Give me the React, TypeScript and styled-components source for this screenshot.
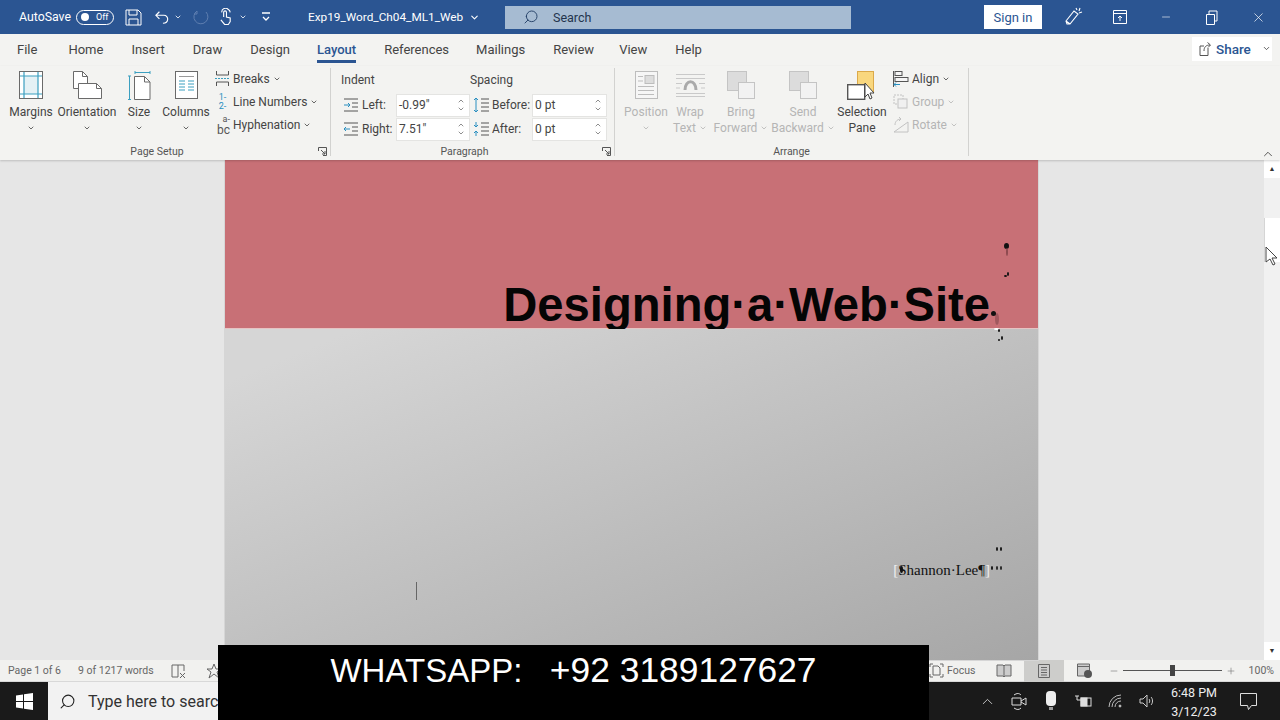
import styled, { createGlobalStyle } from "styled-components";
import { ChevronDown, ChevronUp, Minus, Plus, Search as SearchIcon, X } from "lucide-react";

const GlobalStyle = createGlobalStyle`
  html, body { margin: 0; padding: 0; height: 100%; overflow: hidden; }
  #root { width: 1280px; height: 720px; }
  * { box-sizing: border-box; }
`;

const FONT = `Roboto, "Open Sans", "Liberation Sans", sans-serif`;

const Chev = ({ size = 8, color = "currentColor" }: { size?: number; color?: string }) => (
  <ChevronDown size={size} color={color} strokeWidth={2.4} />
);

function MarginsIcon() {
  return (
    <svg width="24" height="28" viewBox="0 0 24 28" fill="none">
      <rect x=".5" y=".5" width="23" height="27" fill="#fff" stroke="#6a6a6a" />
      <rect x="5" y="5" width="14" height="18" fill="#e4f1f5" />
      <path d="M5 1v26M19 1v26M1 5h22M1 23h22" stroke="#3b9fc0" strokeWidth="1.2" />
    </svg>
  );
}
function OrientationIcon() {
  return (
    <svg width="29" height="28" viewBox="0 0 29 28" fill="none" stroke="#6a6a6a">
      <path d="M.5.500h9l5 5v12H.500z" fill="#fff" />
      <path d="M9.500.500v5h5" />
      <path d="M5.500 12.500h18l5 5v10H5.500z" fill="#fff" />
      <path d="M23.500 12.500v5h5" />
    </svg>
  );
}
function SizeIcon() {
  return (
    <svg width="23" height="29" viewBox="0 0 23 29" fill="none">
      <path d="M7 1.500h15M7 0v3M22 0v3M1.500 5v24M0 5h3M0 28.500h3" stroke="#3b9fc0" />
      <path d="M6.500 5.500h10l5.500 5.500v17.500H6.500z" fill="#fff" stroke="#6a6a6a" />
      <path d="M16.500 5.500V11H22" stroke="#6a6a6a" />
    </svg>
  );
}
function ColumnsIcon() {
  return (
    <svg width="23" height="28" viewBox="0 0 23 28" fill="none">
      <rect x=".5" y=".5" width="22" height="27" fill="#fff" stroke="#6a6a6a" />
      <path d="M4 10h6M13 10h6M4 13h6M13 13h6M4 16h6M13 16h6M4 19h6M13 19h6" stroke="#3b9fc0" />
      <path d="M4 5.500h15" stroke="#9a9a9a" />
    </svg>
  );
}
function BreaksIcon() {
  return (
    <svg width="15" height="15" viewBox="0 0 15 15" fill="none" stroke="#555">
      <path d="M1.500 0v4h12V0M1.500 15v-4h12v4" />
      <path d="M0 7.500h15" stroke="#3b9fc0" strokeDasharray="2 1" />
    </svg>
  );
}
function IndentIcon({ kind }: { kind?: string }) {
  return (
    <svg width="16" height="14" viewBox="0 0 16 14" fill="none" stroke="#555">
      <path d="M1 1h14M9 5h6M9 9h6M1 13h14" />
      <path d={kind === "left" ? "M1 7h6M5 5l2 2-2 2" : "M1 7h6M3 5L1 7l2 2"} stroke="#2a8fc0" />
    </svg>
  );
}
function SpacingIcon({ after }: { after?: boolean }) {
  return (
    <svg width="17" height="16" viewBox="0 0 17 16" fill="none" stroke="#555">
      <path d="M9 2h8M9 6h8M9 10h8M9 14h8" />
      {after ? (
        <path d="M4 1v5M2 4l2 2 2-2M4 15v-5M2 12l2-2 2 2" stroke="#2a8fc0" />
      ) : (
        <path d="M4 1v14M2 3l2-2 2 2M2 13l2 2 2-2" stroke="#2a8fc0" />
      )}
    </svg>
  );
}
function PositionIcon() {
  return (
    <svg width="23" height="28" viewBox="0 0 23 28" fill="none" stroke="#bdbdbd">
      <rect x=".5" y=".5" width="22" height="27" fill="#f6f6f6" />
      <rect x="10" y="4.500" width="9" height="8" fill="#ddd" />
      <path d="M3 5.500h5M3 10h5M3 15.500h16M3 19.500h16M3 23.500h16" />
    </svg>
  );
}
function WrapIcon() {
  return (
    <svg width="29" height="28" viewBox="0 0 29 28" fill="none" stroke="#c9c9c9">
      <path d="M0 3.500h29M0 7.500h29M0 22.500h29M0 25.500h29M0 12.500h6M23 12.500h6M0 17h4M25 17h4" />
      <path d="M9 19c0-11 11-11 11 0" stroke="#aaa" strokeWidth="3" />
    </svg>
  );
}
function StackIcon() {
  return (
    <svg width="28" height="28" viewBox="0 0 28 28" fill="none" stroke="#c4c4c4">
      <rect x=".5" y=".5" width="19" height="19" fill="#dcdcdc" />
      <rect x="11.500" y="11.500" width="16" height="16" fill="#f2f2f2" />
    </svg>
  );
}
function SelectionIcon() {
  return (
    <svg width="30" height="30" viewBox="0 0 30 30" fill="none">
      <rect x="10.500" y=".5" width="16" height="20" fill="#f9d77e" stroke="#dba94a" />
      <rect x=".7" y="13.700" width="17" height="14.600" fill="#fff" stroke="#555" strokeWidth="1.400" />
      <path d="M18 12v14l3-3 2 5 2-1-2-5h4z" fill="#fff" stroke="#444" />
    </svg>
  );
}
function AlignIcon() {
  return (
    <svg width="16" height="16" viewBox="0 0 16 16" fill="none" stroke="#555">
      <path d="M.5 0v16" />
      <rect x="2" y=".5" width="7" height="4" fill="#f5f5f5" />
      <rect x="2" y="6.500" width="13" height="4" fill="#f5f5f5" />
      <path d="M1 13.500h6M3 11.500l-2 2 2 2" stroke="#2a8fc0" />
    </svg>
  );
}
function GroupIcon() {
  return (
    <svg width="16" height="16" viewBox="0 0 16 16" fill="none" stroke="#c2c2c2">
      <rect x="1" y="1" width="9" height="9" strokeDasharray="2 1" />
      <rect x="5" y="5" width="9" height="9" fill="#f0f0f0" />
    </svg>
  );
}
function RotateIcon() {
  return (
    <svg width="16" height="16" viewBox="0 0 16 16" fill="none" stroke="#c2c2c2">
      <path d="M1 15L15 5v10z" />
      <path d="M2 8c0-4 3-6 6-6M6 0l2 2-2 2" />
    </svg>
  );
}
function Launcher() {
  return (
    <svg width="9" height="9" viewBox="0 0 9 9" fill="none" stroke="#555">
      <path d="M.5 4V.5H8.500V8.500H5M3 3l4 4M4 7h3V4" />
    </svg>
  );
}
function WindowsLogo() {
  return (
    <svg width="17" height="17" viewBox="0 0 17 17" fill="#fff">
      <path d="M0 2.400l7-1V8H0zM8 1.200L17 0v8H8zM0 9h7v6.600l-7-1zM8 9h9v8l-9-1.200z" />
    </svg>
  );
}
function CursorArrow() {
  return (
    <svg width="14" height="20" viewBox="0 0 14 20" fill="#fff" stroke="#444">
      <path d="M1 1v15l4-3 3 6 2-1-3-6h5z" />
    </svg>
  );
}

const SpinArrows = () => (
  <Arrows>
    <ChevronUp size={8} strokeWidth={2} />
    <ChevronDown size={8} strokeWidth={2} />
  </Arrows>
);

const specks = [
  { left: 779, top: 83, w: 5, h: 6, c: "#111" },
  { left: 781, top: 88, w: 2, h: 8, c: "#8d4a50" },
  { left: 782, top: 112, w: 2, h: 4, c: "#111" },
  { left: 779, top: 115, w: 3, h: 2, c: "#111" },
  { left: 770, top: 153, w: 4, h: 12, c: "#a0585e" },
  { left: 766, top: 151, w: 5, h: 5, c: "#111" },
  { left: 769, top: 168, w: 5, h: 2, c: "#fff" },
  { left: 773, top: 169, w: 2, h: 3, c: "#111" },
  { left: 776, top: 176, w: 2, h: 4, c: "#111" },
  { left: 773, top: 179, w: 2, h: 2, c: "#111" },
  { left: 771, top: 387, w: 2, h: 4, c: "#111" },
  { left: 775, top: 387, w: 2, h: 4, c: "#111" },
  { left: 675, top: 406, w: 3, h: 7, c: "#111" },
  { left: 766, top: 406, w: 2, h: 4, c: "#111" },
  { left: 771, top: 406, w: 2, h: 4, c: "#222" },
  { left: 775, top: 406, w: 2, h: 4, c: "#222" },
];

export default function App() {
  return (
    <>
      <GlobalStyle />
      <Screen>
        <TitleBar>
          <AutoSave>AutoSave</AutoSave>
          <Toggle>
            <ToggleDot />
            Off
          </Toggle>
          <TitleIcons>
            <svg width="17" height="17" viewBox="0 0 17 17" fill="none" stroke="#fff">
              <path d="M1 1h12l3 3v12H1zM4 1v5h8V1M4 16v-6h9v6" />
            </svg>
            <QatItem $ml={13}>
              <svg width="15" height="15" viewBox="0 0 17 15" fill="none" stroke="#fff" strokeWidth="1.300">
                <path d="M5 1L1 5l4 4M1 5h9c6 0 6 9-1 9" />
              </svg>
            </QatItem>
            <QatItem $ml={4}><Chev color="#fff" /></QatItem>
            <QatItem $ml={11}>
              <svg width="16" height="16" viewBox="0 0 16 16" fill="none" stroke="#5f7fb0">
                <path d="M13 3a7 7 0 1 1-9-1M4 2v3H1" />
              </svg>
            </QatItem>
            <QatItem $ml={10}>
              <svg width="14" height="18" viewBox="0 0 15 18" fill="none" stroke="#fff" strokeWidth="1.200">
                <path d="M5 9V4a1.500 1.500 0 0 1 3 0v5l4 1v4l-2 3H6l-4-5M3 4a4 4 0 0 1 7-3 4 4 0 0 1 2 3" />
              </svg>
            </QatItem>
            <QatItem $ml={6}><Chev color="#fff" /></QatItem>
            <QatItem $ml={14}>
              <svg width="10" height="10" viewBox="0 0 10 10" fill="none" stroke="#fff" strokeWidth="1.300">
                <path d="M1 1h8M2 5l3 3 3-3" />
              </svg>
            </QatItem>
          </TitleIcons>
          <DocName>
            Exp19_Word_Ch04_ML1_Web
            <ChevronDown size={11} color="#fff" strokeWidth={2.4} />
          </DocName>
          <SearchBox>
            <SearchIcon size={16} color="#243f66" strokeWidth={1.4} style={{ transform: "scaleX(-1)" }} />
            Search
          </SearchBox>
          <SignIn>Sign in</SignIn>
          <WinControls>
            <svg width="18" height="20" viewBox="0 0 18 20" fill="none" stroke="#fff" strokeWidth="1.100">
              <path d="M2 17l-1-3 8-10 4 3-8 10zM1 14l4 3M11 1l1 2M15 1l-1 3M17 5l-3 1" />
            </svg>
            <svg width="14" height="14" viewBox="0 0 14 14" fill="none" stroke="#fff">
              <path d="M.5.500h13v13H.500zM.500 3.500h13M7 11V6M5 8l2-2 2 2" />
            </svg>
            <Minus size={12} color="#fff" strokeWidth={1.200} />
            <svg width="12" height="15" viewBox="0 0 12 15" fill="none" stroke="#fff">
              <path d="M.500 4.500h8v10h-8zM3 4V1h8v10H9" />
            </svg>
            <X size={15} color="#fff" strokeWidth={1.100} />
          </WinControls>
        </TitleBar>

        <TabsRow>
          <Tab $mr={3}>File</Tab>
          <Tab>Home</Tab>
          <Tab>Insert</Tab>
          <Tab>Draw</Tab>
          <Tab $mr={-1}>Design</Tab>
          <Tab $active>Layout</Tab>
          <Tab $mr={-1}>References</Tab>
          <Tab>Mailings</Tab>
          <Tab $mr={-3}>Review</Tab>
          <Tab>View</Tab>
          <Tab>Help</Tab>
          <ShareButton>
            <svg width="13" height="14" viewBox="0 0 13 14" fill="none" stroke="#555">
              <path d="M9 6v7.500H1V4h4M5 9c0-4 2-6 6-6M8.500.500L11.500 3 9 5.500" />
            </svg>
            <strong>Share</strong>
            <ChevronDown size={9} color="#444" strokeWidth={2.200} />
          </ShareButton>
        </TabsRow>

        <Ribbon>
          <Group $w={331}>
            <GroupBody $pad={7}>
              <LargeButton $w={48}>
                <IconSlot><MarginsIcon /></IconSlot>
                <BtnLabel>Margins</BtnLabel>
                <BtnLabel><Chev /></BtnLabel>
              </LargeButton>
              <LargeButton $w={64}>
                <IconSlot><OrientationIcon /></IconSlot>
                <BtnLabel>Orientation</BtnLabel>
                <BtnLabel><Chev /></BtnLabel>
              </LargeButton>
              <LargeButton $w={40}>
                <IconSlot><SizeIcon /></IconSlot>
                <BtnLabel>Size</BtnLabel>
                <BtnLabel><Chev /></BtnLabel>
              </LargeButton>
              <LargeButton $w={54}>
                <IconSlot><ColumnsIcon /></IconSlot>
                <BtnLabel>Columns</BtnLabel>
                <BtnLabel><Chev /></BtnLabel>
              </LargeButton>
              <SmallColumn $left={2}>
                <SmallRow><BreaksIcon /><span>Breaks</span><Chev /></SmallRow>
                <SmallRow>
                  <LineNo>1-<br />2-</LineNo>
                  <span>Line Numbers</span><Chev />
                </SmallRow>
                <SmallRow>
                  <Hyphen><small>a-</small><br />bc</Hyphen>
                  <span>Hyphenation</span><Chev />
                </SmallRow>
              </SmallColumn>
            </GroupBody>
            <GroupFoot $pr={16}>
              Page Setup
              <Corner><Launcher /></Corner>
            </GroupFoot>
          </Group>

          <Group $w={284}>
            <ParaGrid>
              <ParaHead>Indent</ParaHead>
              <ParaHead>Spacing</ParaHead>
              <Field $labelW={34}>
                <IndentIcon kind="left" />
                <span>Left:</span>
                <Spin $w={74}>-0.99"<SpinArrows /></Spin>
              </Field>
              <Field $labelW={40}>
                <SpacingIcon />
                <span>Before:</span>
                <Spin $w={75}>0 pt<SpinArrows /></Spin>
              </Field>
              <Field $labelW={34}>
                <IndentIcon />
                <span>Right:</span>
                <Spin $w={74}>7.51"<SpinArrows /></Spin>
              </Field>
              <Field $labelW={40}>
                <SpacingIcon after />
                <span>After:</span>
                <Spin $w={75}>0 pt<SpinArrows /></Spin>
              </Field>
            </ParaGrid>
            <GroupFoot $pr={16}>
              Paragraph
              <Corner><Launcher /></Corner>
            </GroupFoot>
          </Group>

          <Group $w={354}>
            <GroupBody $pad={6}>
              <LargeButton $w={50} $muted>
                <IconSlot><PositionIcon /></IconSlot>
                <BtnLabel>Position</BtnLabel>
                <BtnLabel><Chev /></BtnLabel>
              </LargeButton>
              <LargeButton $w={38} $muted>
                <IconSlot><WrapIcon /></IconSlot>
                <BtnLabel>Wrap</BtnLabel>
                <BtnLabel>Text <Chev /></BtnLabel>
              </LargeButton>
              <LargeButton $w={64} $muted>
                <IconSlot><StackIcon /></IconSlot>
                <BtnLabel>Bring</BtnLabel>
                <BtnLabel>Forward <Chev /></BtnLabel>
              </LargeButton>
              <LargeButton $w={60} $muted>
                <IconSlot><StackIcon /></IconSlot>
                <BtnLabel>Send</BtnLabel>
                <BtnLabel>Backward <Chev /></BtnLabel>
              </LargeButton>
              <LargeButton $w={58}>
                <IconSlot><SelectionIcon /></IconSlot>
                <BtnLabel>Selection</BtnLabel>
                <BtnLabel>Pane</BtnLabel>
              </LargeButton>
              <SmallColumn $left={2}>
                <SmallRow><AlignIcon /><span>Align</span><Chev /></SmallRow>
                <SmallRow $muted><GroupIcon /><span>Group</span><Chev /></SmallRow>
                <SmallRow $muted><RotateIcon /><span>Rotate</span><Chev /></SmallRow>
              </SmallColumn>
            </GroupBody>
            <GroupFoot>Arrange</GroupFoot>
          </Group>
          <Collapse><ChevronUp size={14} color="#444" strokeWidth={1.500} /></Collapse>
        </Ribbon>

        <DocArea>
          <Page>
            <Banner>
              <Heading>Designing·a·Web·Site</Heading>
            </Banner>
            <PageBody>
              <Author>
                <Bracket>[</Bracket>Shannon·Lee¶<Bracket>]</Bracket>
              </Author>
            </PageBody>
            <Caret />
            {specks.map((s, i) => (
              <Speck key={i} $c={s.c} style={{ left: s.left, top: s.top, width: s.w, height: s.h }} />
            ))}
          </Page>
          <Scrollbar>
            <ScrollArrow>▲</ScrollArrow>
            <ScrollTrack>
              <Thumb />
              <Pointer><CursorArrow /></Pointer>
            </ScrollTrack>
            <ScrollArrow>▼</ScrollArrow>
          </Scrollbar>
        </DocArea>

        <StatusBar>
          <StatusText>Page 1 of 6</StatusText>
          <StatusText>9 of 1217 words</StatusText>
          <svg width="15" height="14" viewBox="0 0 15 14" fill="none" stroke="#666">
            <path d="M1 1h12v6M1 1v12h6M7 1v12M9 9l5 5M14 9l-5 5" />
          </svg>
          <svg width="16" height="16" viewBox="0 0 16 16" fill="none" stroke="#666">
            <path d="M8 1l2 5h5l-4 3 2 6-5-4-5 4 2-6-4-3h5z" />
          </svg>
          <StatusRight>
            <FocusItem>
              <svg width="15" height="15" viewBox="0 0 15 15" fill="none" stroke="#666">
                <path d="M1 4V1h3M11 1h3v3M14 11v3h-3M4 14H1v-3M4 3h5l2 2v7H4z" />
              </svg>
              Focus
            </FocusItem>
            <ViewButton>
              <svg width="16" height="13" viewBox="0 0 16 13" fill="#ccc" stroke="#666">
                <path d="M1 1h6l1 1 1-1h6v11H9l-1 1-1-1H1zM8 2v10" />
              </svg>
            </ViewButton>
            <ViewButton $active>
              <svg width="12" height="14" viewBox="0 0 12 14" fill="#ccc" stroke="#666">
                <path d="M.500.500h11v13H.500zM3 3.500h6M3 6h6M3 8.500h6M3 11h6" />
              </svg>
            </ViewButton>
            <ViewButton>
              <svg width="15" height="15" viewBox="0 0 15 15" fill="#ccc" stroke="#666">
                <path d="M.500 1h12v12H.500zM.500 3.500h12" />
                <circle cx="11" cy="11" r="4" fill="#555" stroke="none" />
              </svg>
            </ViewButton>
            <ZoomControl>
              <Minus size={10} color="#777" strokeWidth={1.500} />
              <ZoomTrack><ZoomThumb /></ZoomTrack>
              <Plus size={10} color="#777" strokeWidth={1.500} />
            </ZoomControl>
            <ZoomValue>100%</ZoomValue>
          </StatusRight>
        </StatusBar>

        <Taskbar>
          <StartButton><WindowsLogo /></StartButton>
          <TaskSearch>
            <SearchIcon size={17} color="#222" strokeWidth={1.500} style={{ transform: "scaleX(-1)" }} />
            <span>Type here to search</span>
          </TaskSearch>
          <Tray>
            <ChevronUp size={17} color="#ddd" strokeWidth={1.200} />
            <svg width="16" height="18" viewBox="0 0 16 18" fill="none" stroke="#ddd">
              <path d="M1 6h9v7H1zM10 9l5-3v7l-5-3M3 3c3-2 5-2 7 0M3 16c3 2 5 2 7 0" />
            </svg>
            <svg width="10" height="20" viewBox="0 0 10 20" fill="#eee">
              <rect x="0" y="0" width="10" height="15" rx="4" />
              <rect x="3" y="16" width="4" height="3" fill="#999" />
            </svg>
            <svg width="17" height="12" viewBox="0 0 17 12" fill="none" stroke="#ddd">
              <rect x="6" y="3" width="10" height="8" fill="#1a1a1a" />
              <rect x="6" y="3" width="6" height="8" fill="#ddd" />
              <path d="M0 1h4M2 1v4h4" />
            </svg>
            <svg width="14" height="14" viewBox="0 0 14 14" fill="none" stroke="#bbb">
              <path d="M1 13A12 12 0 0 1 13 1M4 13a9 9 0 0 1 9-9M7 13a6 6 0 0 1 6-6" />
              <circle cx="12" cy="12" r="1" fill="#ddd" />
            </svg>
            <svg width="16" height="14" viewBox="0 0 16 14" fill="none" stroke="#ccc">
              <path d="M1 5h3l4-4v12L4 9H1zM10 5c1 1 1 3 0 4M12 3c2 2 2 6 0 8" />
            </svg>
          </Tray>
          <Clock>
            <span>6:48 PM</span>
            <span>3/12/23</span>
          </Clock>
          <Notify>
            <svg width="17" height="17" viewBox="0 0 17 17" fill="none" stroke="#ddd">
              <path d="M.500.500h16v12h-5l-3 4-1-4H.500z" />
            </svg>
          </Notify>
        </Taskbar>

        <Whatsapp>
          WHATSAPP:   <Phone>+92 3189127627</Phone>
        </Whatsapp>
      </Screen>
    </>
  );
}

const Screen = styled.div`
  position: relative;
  width: 1280px;
  height: 720px;
  display: flex;
  flex-direction: column;
  overflow: hidden;
  font-family: ${FONT};
  background: #f3f3f1;
  color: #444;
`;

const TitleBar = styled.div`
  height: 34px;
  flex: none;
  display: flex;
  align-items: center;
  padding-left: 19px;
  background: #2b5592;
  color: #fff;
  & > * { flex: none; }
`;

const AutoSave = styled.span`
  font-size: 12.300px;
  width: 57px;
`;

const Toggle = styled.div`
  width: 38px;
  height: 15px;
  border: 1px solid #fff;
  border-radius: 8px;
  display: flex;
  align-items: center;
  gap: 7px;
  padding-left: 4px;
  font-size: 9px;
`;

const ToggleDot = styled.div`
  width: 8px;
  height: 8px;
  border-radius: 50%;
  background: #fff;
`;

const TitleIcons = styled.div`
  display: flex;
  align-items: center;
  margin-left: 11px;
  width: 183px;
`;

const QatItem = styled.span<{ $ml: number }>`
  display: flex;
  margin-left: ${(p) => p.$ml}px;
`;

const DocName = styled.div`
  display: flex;
  align-items: center;
  gap: 6px;
  font-size: 11.800px;
  width: 197px;
`;

const SearchBox = styled.div`
  width: 346px;
  height: 23px;
  background: #a6bbd2;
  color: #24344d;
  display: flex;
  align-items: center;
  gap: 14px;
  padding-left: 18px;
  font-size: 12.500px;
`;

const SignIn = styled.div`
  margin-left: 133px;
  width: 58px;
  height: 24px;
  background: #fff;
  color: #2b5592;
  font-size: 13px;
  display: flex;
  align-items: center;
  justify-content: center;
`;

const WinControls = styled.div`
  margin-left: 9px;
  display: grid;
  grid-template-columns: repeat(5, 46px);
  justify-items: center;
  align-items: center;
`;

const TabsRow = styled.div`
  height: 32px;
  flex: none;
  display: flex;
  align-items: center;
  gap: 28px;
  padding-left: 17px;
  position: relative;
`;

const Tab = styled.div<{ $active?: boolean; $mr?: number }>`
  font-size: 13px;
  line-height: 32px;
  height: 32px;
  position: relative;
  margin-right: ${(p) => p.$mr ?? 0}px;
  color: ${(p) => (p.$active ? "#2b5592" : "#444")};
  font-weight: ${(p) => (p.$active ? 500 : 400)};
  &::after {
    content: "";
    display: ${(p) => (p.$active ? "block" : "none")};
    position: absolute;
    left: 0;
    right: 0;
    bottom: 3px;
    height: 3px;
    background: #2b5592;
  }
`;

const ShareButton = styled.div`
  margin-left: auto;
  margin-right: 8px;
  width: 80px;
  height: 24px;
  margin-top: -3px;
  background: #fff;
  display: flex;
  align-items: center;
  gap: 4px;
  padding-left: 7px;
  font-size: 13.500px;
  color: #2b5592;
  strong { font-weight: 500; margin-right: 7px; }
`;

const Ribbon = styled.div`
  height: 94px;
  flex: none;
  display: flex;
  position: relative;
  padding-top: 2px;
  background: #f3f3f1;
  box-shadow: 0 1px 2px rgba(0, 0, 0, 0.18);
  z-index: 1;
`;

const Group = styled.div<{ $w: number }>`
  width: ${(p) => p.$w}px;
  height: 88px;
  display: flex;
  flex-direction: column;
  border-right: 1px solid #d2d2d0;
`;

const GroupBody = styled.div<{ $pad: number }>`
  flex: none;
  height: 76px;
  display: flex;
  padding-left: ${(p) => p.$pad}px;
`;

const GroupFoot = styled.div<{ $pr?: number }>`
  height: 16px;
  flex: none;
  position: relative;
  text-align: center;
  font-size: 10.500px;
  line-height: 16px;
  color: #555;
  padding-right: ${(p) => p.$pr ?? 0}px;
`;

const Corner = styled.span`
  position: absolute;
  right: 3px;
  top: 3px;
  display: flex;
`;

const LargeButton = styled.div<{ $w: number; $muted?: boolean }>`
  width: ${(p) => p.$w}px;
  display: flex;
  flex-direction: column;
  align-items: center;
  color: ${(p) => (p.$muted ? "#b5b5b5" : "#444")};
`;

const IconSlot = styled.div`
  height: 36px;
  padding-top: 3px;
  display: flex;
  align-items: flex-start;
  justify-content: center;
`;

const BtnLabel = styled.div`
  font-size: 12px;
  line-height: 16px;
  white-space: nowrap;
  display: flex;
  align-items: center;
  gap: 3px;
  height: 16px;
`;

const SmallColumn = styled.div<{ $left: number }>`
  margin-left: ${(p) => p.$left}px;
  margin-top: -1px;
  display: flex;
  flex-direction: column;
`;

const SmallRow = styled.div<{ $muted?: boolean }>`
  height: 23px;
  display: flex;
  align-items: center;
  gap: 3px;
  font-size: 12px;
  white-space: nowrap;
  color: ${(p) => (p.$muted ? "#b5b5b5" : "#444")};
`;

const LineNo = styled.span`
  width: 15px;
  font-size: 9px;
  line-height: 9px;
  text-align: center;
  color: #2a8fc0;
`;

const Hyphen = styled.span`
  width: 15px;
  font-size: 12px;
  line-height: 11px;
  text-align: right;
  color: #555;
  small { font-size: 9px; }
`;

const ParaGrid = styled.div`
  flex: none;
  height: 76px;
  display: grid;
  grid-template-columns: 129px 1fr;
  grid-template-rows: 22px 24px 24px;
  padding: 3px 0 0 10px;
  align-content: start;
`;

const ParaHead = styled.div`
  font-size: 12px;
  line-height: 18px;
  color: #444;
`;

const Field = styled.div<{ $labelW: number }>`
  display: flex;
  align-items: center;
  font-size: 12px;
  height: 24px;
  padding-left: 2px;
  svg:first-child { flex: none; margin-right: 3px; }
  span { width: ${(p) => p.$labelW}px; color: #444; }
`;

const Spin = styled.div<{ $w: number }>`
  width: ${(p) => p.$w}px;
  height: 23px;
  background: #fff;
  border: 1px solid #e4e4e2;
  display: flex;
  align-items: center;
  justify-content: space-between;
  padding: 0 1px 0 2px;
  font-size: 12px;
  color: #444;
  flex: none;
`;

const Arrows = styled.div`
  display: flex;
  flex-direction: column;
  color: #555;
`;

const Collapse = styled.div`
  position: absolute;
  right: 5px;
  bottom: -1px;
  display: flex;
`;

const DocArea = styled.div`
  height: 500px;
  flex: none;
  display: flex;
  background: #e6e6e6;
  padding-left: 225px;
`;

const Page = styled.div`
  width: 813px;
  position: relative;
  display: flex;
  flex-direction: column;
  overflow: hidden;
  box-shadow: 0 0 0 1px #d6d6d6;
`;

const Banner = styled.div`
  height: 169px;
  flex: none;
  display: flex;
  align-items: flex-end;
  justify-content: flex-end;
  padding-right: 48px;
  background: #c87076;
  border-bottom: 1px solid #e6c3c3;
`;

const Heading = styled.h1`
  margin: 0;
  font-family: "Liberation Sans", Arial, sans-serif;
  font-weight: 700;
  font-size: 47.200px;
  line-height: 46px;
  color: #050505;
  white-space: nowrap;
`;

const PageBody = styled.div`
  flex: 1;
  display: flex;
  justify-content: flex-end;
  padding: 232px 48px 0 0;
  background: linear-gradient(to bottom right, #d6d6d6 8%, #a6a6a6 100%);
`;

const Author = styled.div`
  font-family: "Liberation Serif", "Times New Roman", serif;
  font-size: 15px;
  line-height: 18px;
  color: #111;
  height: 18px;
  white-space: nowrap;
`;

const Bracket = styled.span`
  color: #eee;
`;

const Caret = styled.div`
  position: absolute;
  left: 191px;
  top: 422px;
  width: 1px;
  height: 18px;
  background: #666;
`;

const Speck = styled.span<{ $c: string }>`
  position: absolute;
  border-radius: 50%;
  background: ${(p) => p.$c};
`;

const Scrollbar = styled.div`
  margin-left: auto;
  width: 16px;
  display: flex;
  flex-direction: column;
  background: #f1f1f1;
`;

const ScrollArrow = styled.div`
  height: 18px;
  display: flex;
  align-items: center;
  justify-content: center;
  font-size: 7px;
  color: #333;
  background: #fff;
`;

const ScrollTrack = styled.div`
  flex: 1;
  position: relative;
  padding-top: 40px;
`;

const Thumb = styled.div`
  height: 44px;
  background: #fff;
  border-left: 1px solid #d5d5d5;
`;

const Pointer = styled.div`
  position: absolute;
  left: 1px;
  top: 68px;
  display: flex;
`;

const StatusBar = styled.div`
  height: 22px;
  flex: none;
  display: flex;
  align-items: center;
  padding-left: 8px;
  background: #f1f1ef;
  color: #666;
  border-bottom: 1px solid #d8d8d8;
  svg { flex: none; }
  & > svg { margin-right: 20px; }
`;

const StatusText = styled.span`
  font-size: 10.500px;
  margin-right: 17px;
`;

const StatusRight = styled.div`
  margin-left: auto;
  display: flex;
  align-items: center;
  height: 22px;
`;

const FocusItem = styled.div`
  display: flex;
  align-items: center;
  gap: 3px;
  font-size: 10.500px;
  width: 55px;
`;

const ViewButton = styled.div<{ $active?: boolean }>`
  width: 40px;
  height: 22px;
  display: flex;
  align-items: center;
  justify-content: center;
  background: ${(p) => (p.$active ? "#cdcdcb" : "transparent")};
`;

const ZoomControl = styled.div`
  display: flex;
  align-items: center;
  gap: 4px;
  margin-left: 5px;
`;

const ZoomTrack = styled.div`
  width: 99px;
  height: 1px;
  background: #555;
  position: relative;
`;

const ZoomThumb = styled.div`
  position: absolute;
  left: 47px;
  top: -5px;
  width: 5px;
  height: 11px;
  background: #444;
`;

const ZoomValue = styled.span`
  width: 44px;
  font-size: 10.500px;
  text-align: right;
  padding-right: 6px;
`;

const Taskbar = styled.div`
  height: 38px;
  flex: none;
  display: flex;
  align-items: center;
  background: #1a1a1a;
  color: #eee;
`;

const StartButton = styled.div`
  width: 48px;
  height: 100%;
  display: flex;
  align-items: center;
  justify-content: center;
`;

const TaskSearch = styled.div`
  width: 300px;
  height: 100%;
  display: flex;
  align-items: center;
  gap: 12px;
  padding: 1px 0 0 11px;
  background: #f2f2f2;
  color: #333;
  font-size: 16px;
  white-space: nowrap;
`;

const Tray = styled.div`
  margin-left: auto;
  display: grid;
  grid-template-columns: repeat(6, 32px);
  justify-items: center;
  align-items: center;
`;

const Clock = styled.div`
  display: flex;
  flex-direction: column;
  align-items: center;
  width: 62px;
  padding-top: 1px;
  font-size: 12.500px;
  line-height: 19px;
`;

const Notify = styled.div`
  width: 46px;
  margin-right: 9px;
  display: flex;
  justify-content: center;
`;

const Whatsapp = styled.div`
  position: absolute;
  left: 218px;
  top: 645px;
  width: 711px;
  height: 75px;
  background: #000;
  color: #fff;
  font-family: "Liberation Sans", Arial, sans-serif;
  font-size: 33px;
  line-height: 51px;
  text-align: center;
  white-space: pre;
`;

const Phone = styled.span`
  font-size: 35.400px;
`;
